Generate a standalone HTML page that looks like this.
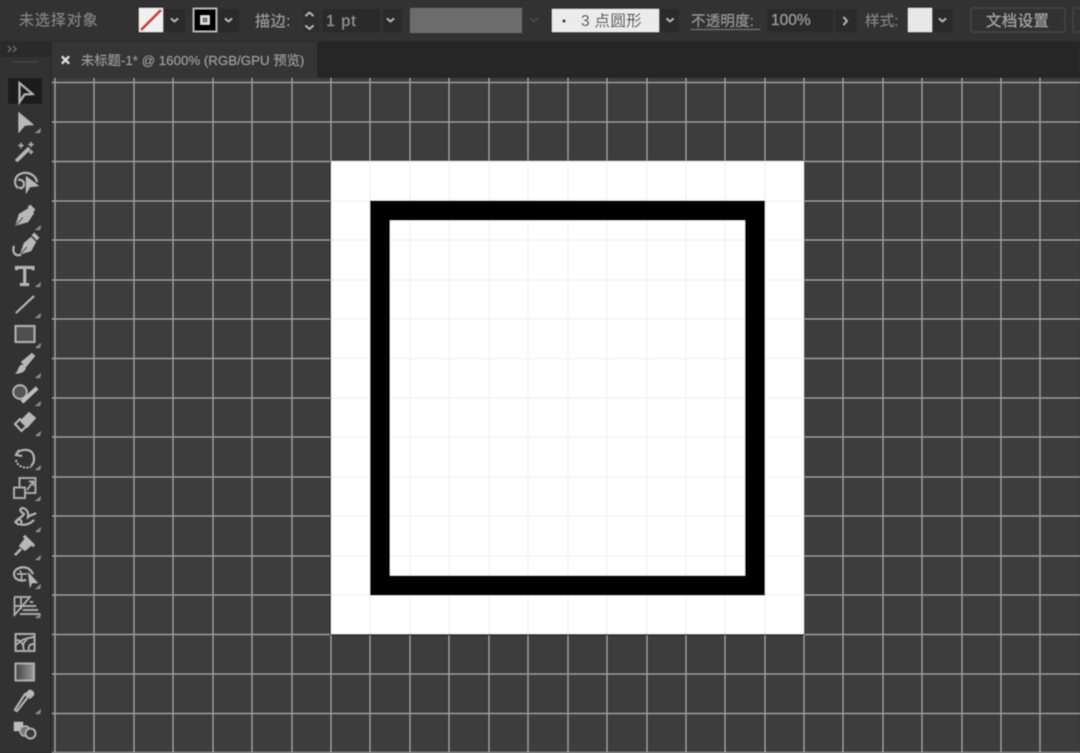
<!DOCTYPE html>
<html lang="zh"><head><meta charset="utf-8"><title>未标题-1</title>
<style>
html,body{margin:0;padding:0;background:#333;width:1080px;height:753px;overflow:hidden}
svg{display:block;position:absolute;left:0;top:0}
text{font-family:"Liberation Sans","Noto Sans CJK SC",sans-serif}
.ic{fill:none;stroke:#b8b8b8;stroke-width:1.800}
.f{fill:#b8b8b8;stroke:none}
.tri{fill:#8e8e8e;stroke:none}
.chev{fill:none;stroke:#bcbcbc;stroke-width:1.500}
</style></head><body>
<svg width="1080" height="753" viewBox="0 0 1080 753" xmlns="http://www.w3.org/2000/svg">
<defs>
<filter id="soft" x="0" y="0" width="100%" height="100%"><feGaussianBlur stdDeviation="0.45"/></filter>
<g id="v"><path d="M55 78V753M94 78V753M134 78V753M173 78V753M213 78V753M252 78V753M292 78V753M331 78V753M370 78V753M410 78V753M449 78V753M489 78V753M528 78V753M568 78V753M607 78V753M647 78V753M686 78V753M725 78V753M765 78V753M804 78V753M843 78V753M883 78V753M922 78V753M962 78V753M1001 78V753M1040 78V753"/></g>
<g id="h"><path d="M52 82.500H1080M52 122H1080M52 161.500H1080M52 201H1080M52 240H1080M52 280H1080M52 319H1080M52 358.500H1080M52 398H1080M52 437H1080M52 477H1080M52 516H1080M52 556H1080M52 595H1080M52 634.500H1080M52 674H1080M52 713.500H1080M52 752.500H1080"/></g>
<clipPath id="art"><rect x="331" y="161" width="473" height="473"/></clipPath>
<linearGradient id="g"><stop offset="0" stop-color="#444"/><stop offset="1" stop-color="#9a9a9a"/></linearGradient>
</defs>
<g filter="url(#soft)">
<!-- backgrounds -->
<rect width="1080" height="753" fill="#3d3d3d"/>
<rect width="1080" height="41" fill="#333"/>
<rect y="41" width="1080" height="37" fill="#272727"/>
<rect y="41" width="52" height="712" fill="#323232"/>
<rect y="41" width="52" height="16" fill="#2b2b2b"/>
<rect x="50" y="41" width="2" height="712" fill="#2a2a2a"/>
<rect x="52" y="42" width="265" height="36" fill="#343434"/>

<!-- canvas grid -->
<g stroke="#a6a6a6" stroke-width="1" fill="none"><use href="#v"/><use href="#h"/></g>

<!-- artboard -->
<rect x="331" y="161" width="473" height="473" fill="#fff"/>
<path d="M330.500 161V635H804" fill="none" stroke="#1a1a1a" stroke-width="1"/>
<path d="M331 161.200H804V634.500H331" fill="none" stroke="#222" stroke-width="1"/>
<g clip-path="url(#art)" stroke="#f0f0f0" stroke-width="1" fill="none"><use href="#v"/><use href="#h"/></g>
<rect x="380" y="210.500" width="375" height="375" fill="none" stroke="#000" stroke-width="20"/>

<!-- control bar -->
<text x="19" y="25" font-size="15" fill="#858585" letter-spacing=".9">未选择对象</text>
<rect x="139" y="8" width="24" height="24" fill="#f1efef"/>
<path d="M141 30L161 10" stroke="#c63a3a" stroke-width="2.800"/>
<rect x="165" y="9" width="20" height="23" fill="#2a2a2a"/>
<path d="M171 18.500l3.500 3 3.500-3" class="chev"/>
<rect x="193.500" y="8.500" width="23" height="23" fill="#000" stroke="#d0d0d0" stroke-width="1.300"/>
<rect x="201.500" y="16.500" width="7" height="7" fill="#777" stroke="#e4e4e4" stroke-width="2"/>
<rect x="219" y="9" width="20" height="23" fill="#2a2a2a"/>
<path d="M225 18.500l3.500 3 3.500-3" class="chev"/>
<text x="255" y="26" font-size="15" fill="#9c9c9c" letter-spacing=".6">描边:</text>
<rect x="303" y="9" width="16" height="23" fill="#2d2d2d"/>
<path d="M305.500 16l4-3.500 4 3.500M305.500 25.500l4 3.500 4-3.500" class="chev"/>
<rect x="322" y="9" width="58" height="23" fill="#2a2a2a"/>
<text x="326" y="26" font-size="16" fill="#949494" letter-spacing="1">1 pt</text>
<rect x="383" y="9" width="19" height="23" fill="#2a2a2a"/>
<path d="M387 18.500l3.500 3 3.500-3" class="chev"/>
<rect x="410" y="8" width="112" height="25" fill="#6c6c6c"/>
<path d="M530 18l4 3.500 4-3.500" fill="none" stroke="#4c4c4c" stroke-width="1.400"/>
<rect x="552" y="9" width="107" height="23" fill="#ececec"/>
<circle cx="564" cy="21" r="1.600" fill="#222"/>
<text x="581" y="26" font-size="15.500" fill="#333" letter-spacing=".3">3 点圆形</text>
<rect x="661" y="9" width="18" height="23" fill="#2a2a2a"/>
<path d="M666.500 18.500l3.500 3 3.500-3" class="chev"/>
<text x="691" y="26" font-size="14.500" fill="#989898" letter-spacing=".2">不透明度:</text>
<path d="M691 29.500H760" stroke="#8c8c8c" stroke-width="1" stroke-dasharray="1.500 1"/>
<rect x="767" y="9" width="66" height="23" fill="#2a2a2a"/>
<text x="771" y="25" font-size="15.500" fill="#9c9c9c">100%</text>
<rect x="835" y="9" width="22" height="23" fill="#2a2a2a"/>
<path d="M843.500 17l3.500 4-3.500 4" class="chev"/>
<text x="865" y="26" font-size="14.500" fill="#858585" letter-spacing=".2">样式:</text>
<rect x="908" y="8" width="24" height="24" fill="#e8e8e8"/>
<rect x="934" y="9" width="19" height="23" fill="#2a2a2a"/>
<path d="M939 18.500l3.500 3 3.500-3" class="chev"/>
<rect x="971" y="8" width="94" height="24" rx="2" fill="#303030" stroke="#4c4c4c" stroke-width="1"/>
<text x="986" y="26" font-size="15.500" fill="#a8a8a8" letter-spacing=".3">文档设置</text>
<rect x="1073" y="8" width="12" height="24" rx="2" fill="#303030" stroke="#4c4c4c" stroke-width="1"/>

<!-- tab -->
<path d="M62 56.500l7 7M69 56.500l-7 7" stroke="#e0e0e0" stroke-width="2" fill="none"/>
<text x="81" y="65" font-size="13.300" fill="#9c9c9c">未标题-1* @ 1600% (RGB/GPU 预览)</text>
<path d="M8 46l3 3-3 3M13 46l3 3-3 3" fill="none" stroke="#6e6e6e" stroke-width="1.200"/>
<path d="M12 62H38" stroke="#444" stroke-width="1.500"/>

<!-- tools -->
<rect x="8" y="78" width="34" height="26" rx="1" fill="#1c1c1c"/>
<path class="ic" d="M19.500 83L32.500 94L24.500 94.500L19.500 102Z"/>
<path class="f" d="M18.500 112L34 125L25 125.500L18.500 133Z"/>
<path class="tri" d="M41 128l-1 5h-5z"/>
<path class="f" d="M15 160L28 147L30.500 149.500L17.500 162Z"/>
<path d="M21 143v5M18.500 145.500h5M31 142v5M28.500 144.500h5M31 150v4M29 152h4" stroke="#b8b8b8" stroke-width="1.200" fill="none"/>
<path class="ic" d="M18 188C13 184 14 175 23 173C30 172 36 176 37 182M18 180C21 179 24 181 24 184C24 187 21 190 19 187"/>
<path class="f" d="M26 176L39 186L30 187L26 194Z"/>
<path class="f" d="M15.500 225.500L19 214L29 208L34 213L28 222Z"/>
<path d="M29 206l5 5" stroke="#b8b8b8" stroke-width="3.500"/>
<path d="M16.500 224.500L23 217.500" stroke="#333" stroke-width="1"/>
<path class="tri" d="M41 225l-1 5h-5z"/>
<path class="f" d="M20 254.500L24 243L31 237L36 242L31 251Z"/>
<path d="M33 234l5 5" stroke="#b8b8b8" stroke-width="3.500"/>
<path d="M21 253.500L27 247" stroke="#333" stroke-width="1"/>
<path class="ic" d="M21 254.500C15 257 12 252 14 246"/>
<path d="M16.500 270V267.500H33V270M24.700 267.500V284M20 284.500H29" stroke="#b8b8b8" stroke-width="2.800" fill="none"/>
<path class="tri" d="M41 282l-1 5h-5z"/>
<path d="M16 313L34 296" stroke="#b8b8b8" stroke-width="1.800"/>
<path class="tri" d="M41 313l-1 5h-5z"/>
<rect x="15.500" y="326" width="19" height="16" fill="#505050" stroke="#b8b8b8" stroke-width="1.700"/>
<path class="tri" d="M41 343l-1 5h-5z"/>
<path class="f" d="M21 362L32 353L35 356L26 367ZM15 373.500C19 372 18 363 24 365C28 367 25 374 15 373.500Z"/>
<path class="tri" d="M41 373l-1 5h-5z"/>
<circle cx="20" cy="392" r="6.800" fill="#555" stroke="#b8b8b8" stroke-width="1.600"/>
<path d="M22 402L37 388" stroke="#c0c0c0" stroke-width="3.800"/>
<path class="tri" d="M41 401l-1 5h-5z"/>
<path class="f" d="M20 421L29 412L36 418L27 428Z"/>
<path class="ic" d="M15 424L20 419L26.500 426L21.500 431Z"/>
<path class="tri" d="M41 431l-1 5h-5z"/>
<path class="ic" d="M16 454C20 449 30 448 33 454C35 459 34 463 31 466M19 450L16 455L22 456"/>
<path d="M16 460C17 466 24 469 31 467" fill="none" stroke="#b8b8b8" stroke-width="1.600" stroke-dasharray="2 1.500"/>
<path class="tri" d="M41 465l-1 5h-5z"/>
<rect x="19.500" y="478" width="16" height="15" fill="none" stroke="#b8b8b8" stroke-width="1.500"/>
<rect x="14" y="487.500" width="11" height="10.500" fill="#333" stroke="#b8b8b8" stroke-width="1.500"/>
<path d="M27 490L33 482M29 481.500h4.500V486" stroke="#b8b8b8" stroke-width="1.400" fill="none"/>
<path class="tri" d="M41 496l-1 5h-5z"/>
<path class="ic" d="M15 523C18 517 21 519 24 514C20 511 19 510 22 508C26 508 29 512 28 517C31 514 34 515 36 513M20 524C24 526 30 524 34 520"/>
<circle cx="19" cy="522" r="2.500" class="ic"/>
<path class="tri" d="M41 527l-1 5h-5z"/>
<path class="f" d="M19 546L26 537L33 544L25 551Z"/>
<path d="M21 549L15 555" stroke="#b8b8b8" stroke-width="2.200"/>
<path d="M24 536L34 546" stroke="#b8b8b8" stroke-width="2.800"/>
<path class="tri" d="M41 555l-1 5h-5z"/>
<path class="ic" d="M26 580C18 582 14 578 14 574C14 569 21 566 27 568C30 569 32 572 33 574"/>
<path class="ic" style="stroke-width:1.200" d="M17 574H27M20 570.500C22 574 22 577 21 580"/>
<path class="f" d="M28 572L38 583L32 583L30 588Z"/>
<path class="tri" d="M41 584l-1 5h-5z"/>
<path class="ic" style="stroke-width:1.400" d="M14.500 597V615L30 597Q24 597 14.500 597M21 597V609M14.500 606H28M30 602H33M27 606H36M23 610H38M20 614H40"/>
<path class="tri" d="M41 613l-1 5h-5z"/>
<rect x="15.500" y="634" width="19" height="17" fill="none" stroke="#b8b8b8" stroke-width="1.600"/>
<path class="ic" style="stroke-width:1.400" d="M16 645C20 641 22 639 34 637M24 650C22 645 24 641 27 640M16 640C19 640 21 641 23 645M29 650C28 646 30 644 34 644"/>
<rect x="15.500" y="663.500" width="18.500" height="17" fill="url(#g)" stroke="#b8b8b8" stroke-width="1.600"/>
<path class="ic" d="M16 708L15 710L17 711L28 697L25 694Z"/>
<path class="f" d="M25 694L29 690C31 689 35 692 34 695L30 699Z"/>
<path class="tri" d="M41 709l-1 5h-5z"/>
<rect x="14" y="722" width="9" height="9" fill="#bcbcbc"/>
<circle cx="25" cy="731" r="5" fill="#777" stroke="#b8b8b8" stroke-width="1.300"/>
<circle cx="30.500" cy="733.500" r="5" fill="#3a3a3a" stroke="#b8b8b8" stroke-width="1.500"/>
</g>
</svg>
</body></html>
